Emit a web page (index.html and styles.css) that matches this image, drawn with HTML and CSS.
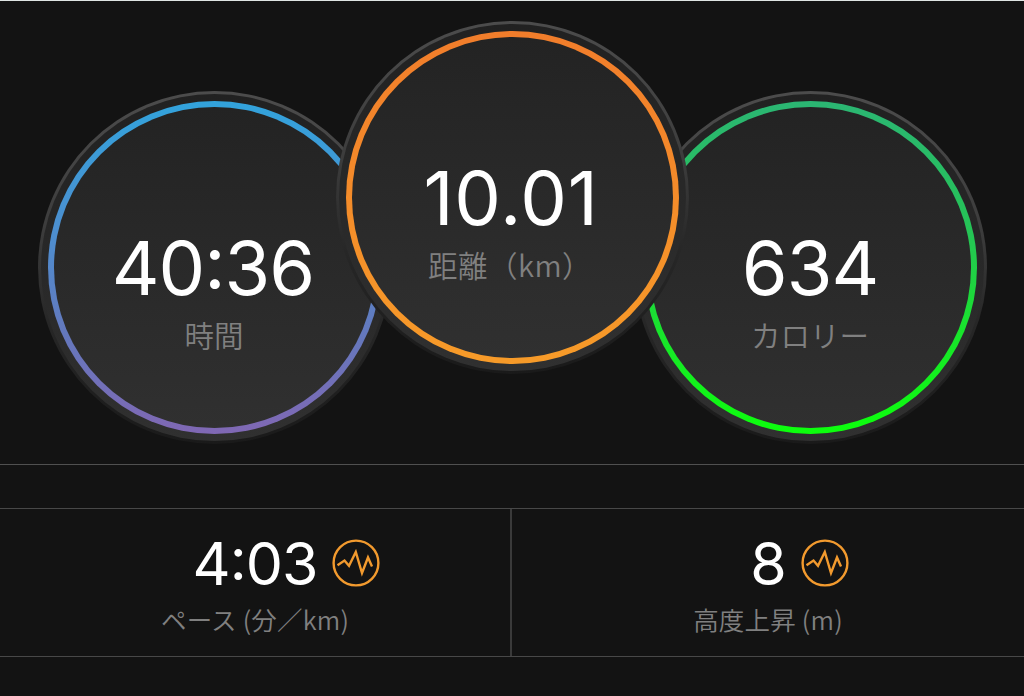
FILE: index.html
```html
<!DOCTYPE html>
<html lang="ja">
<head>
  <meta charset="UTF-8">
  <meta name="viewport" content="width=device-width, initial-scale=1.0">
  <title>ランニング</title>
  <link rel="stylesheet" href="styles.css">
</head>
<body>
  <div class="dials">
    <div class="dial time">
      <div class="ring">
        <div class="value">40<span class="colon">:</span>36</div>
        <div class="label">時間</div>
      </div>
    </div>
    <div class="dial distance">
      <div class="ring">
        <div class="value">10.01</div>
        <div class="label">距離（km）</div>
      </div>
    </div>
    <div class="dial calories">
      <div class="ring">
        <div class="value">634</div>
        <div class="label">カロリー</div>
      </div>
    </div>
  </div>

  <div class="spacer"></div>

  <div class="stats">
    <div class="stat pace">
      <div class="stat-value">
        4<span class="colon">:</span>03
        <svg class="chart-icon" viewBox="0 0 48 48">
          <circle cx="24" cy="24" r="22.4"/>
          <path d="M5.5 26.2L12.5 21.5L17 26.8L23.8 13L30 34L36 18.5L40 27.5"/>
        </svg>
      </div>
      <div class="stat-label">ペース (分／km)</div>
    </div>
    <div class="stat climb">
      <div class="stat-value">
        8
        <svg class="chart-icon" viewBox="0 0 48 48">
          <circle cx="24" cy="24" r="22.4"/>
          <path d="M5.5 26.2L12.5 21.5L17 26.8L23.8 13L30 34L36 18.5L40 27.5"/>
        </svg>
      </div>
      <div class="stat-label">高度上昇 (m)</div>
    </div>
  </div>
</body>
</html>
```

FILE: styles.css
```css
* {
  box-sizing: border-box;
}

body {
  margin: 0;
  height: 696px;
  border-top: 1px solid #dfe5e3;
  background: #131313;
  color: #fff;
  font-family: Inter, "Noto Sans CJK JP", sans-serif;
  overflow: hidden;
}

.dials {
  display: flex;
  justify-content: center;
  align-items: flex-end;
  height: 463px;
  padding-bottom: 20px;
}

.dial {
  flex: none;
  width: 353px;
  height: 353px;
  padding: 7px;
  border: 3px solid transparent;
  border-radius: 50%;
  background:
    linear-gradient(#212121, #303030) padding-box,
    linear-gradient(#4c4c4c, #3c3c3c 40%, #272727 65%, #1a1a1a) border-box;
}

.ring {
  display: flex;
  flex-direction: column;
  align-items: center;
  width: 333px;
  height: 333px;
  padding-top: 121px;
  border: 6px solid transparent;
  border-radius: 50%;
}

.time .ring {
  background:
    linear-gradient(#232323, #303030) padding-box,
    linear-gradient(#32a3dc, #4d8ecf 40%, #6478bd 70%, #8068b4) border-box;
}

.distance {
  z-index: 1;
  margin: 0 -55px 70px;
}

.distance .ring {
  background:
    linear-gradient(#232323, #303030) padding-box,
    linear-gradient(#f17d2b, #f79b29) border-box;
}

.calories .ring {
  background:
    linear-gradient(#232323, #303030) padding-box,
    linear-gradient(#2bb673, #25c455 40%, #18e52b 70%, #0cff0c) border-box;
}

.value {
  font-size: 74px;
  line-height: 80px;
  letter-spacing: -1px;
}

.distance .value {
  margin-left: -2px;
  letter-spacing: 0.8px;
}

.time .value {
  margin-left: -2px;
}

.colon {
  position: relative;
  top: -0.08em;
}

.label {
  margin-top: 4px;
  color: #808080;
  font-family: "Noto Sans CJK JP", sans-serif;
  font-size: 29.5px;
  font-weight: 350;
  line-height: 44px;
}

.distance .label {
  margin-left: -4px;
  letter-spacing: 0.5px;
}

.spacer {
  height: 45px;
  border-top: 1px solid #505050;
  border-bottom: 1px solid #484848;
}

.stats {
  display: flex;
  height: 148px;
  border-bottom: 1px solid #484848;
}

.stat {
  display: flex;
  flex-direction: column;
  align-items: center;
  flex: 1;
  padding-top: 26px;
}

.pace {
  flex: none;
  width: 512px;
  border-right: 2px solid #3a3a3a;
}

.stat-value {
  position: relative;
  font-size: 59px;
  line-height: 58px;
  letter-spacing: -1px;
}

/* sits beside the number without shifting its centering */
.chart-icon {
  position: absolute;
  left: 100%;
  top: 4px;
  width: 48px;
  height: 48px;
  margin-left: 15px;
  fill: none;
  stroke: #f29a2e;
  stroke-width: 2.4;
}

.stat-label {
  color: #808080;
  font-family: "Noto Sans CJK JP", sans-serif;
  font-size: 25.5px;
  font-weight: 350;
  line-height: 36px;
  margin-top: 8px;
  letter-spacing: 0.2px;
}
```
